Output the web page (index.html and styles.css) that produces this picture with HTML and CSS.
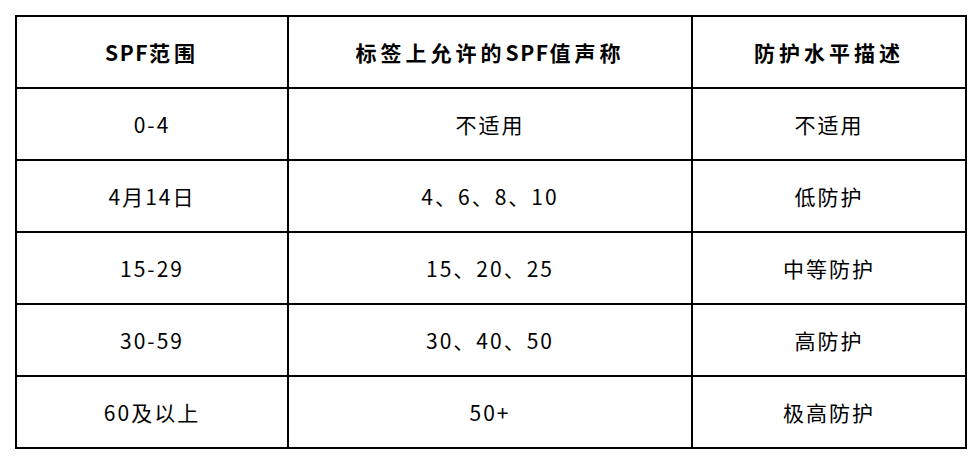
FILE: index.html
```html
<!DOCTYPE html>
<html lang="zh-CN">
<head>
<meta charset="utf-8">
<link rel="stylesheet" href="styles.css">
</head>
<body>
<table class="spf">
  <colgroup><col class="c1"><col class="c2"><col class="c3"></colgroup>
  <thead>
    <tr><th><span class="lat">SPF</span>范围</th><th>标签上允许的<span class="lat">SPF</span>值声称</th><th>防护水平描述</th></tr>
  </thead>
  <tbody>
    <tr><td>0-4</td><td>不适用</td><td>不适用</td></tr>
    <tr><td>4月14日</td><td>4、6、8、10</td><td>低防护</td></tr>
    <tr><td>15-29</td><td>15、20、25</td><td>中等防护</td></tr>
    <tr><td>30-59</td><td>30、40、50</td><td>高防护</td></tr>
    <tr><td>60及以上</td><td>50+</td><td>极高防护</td></tr>
  </tbody>
</table>
</body>
</html>
```
FILE: styles.css
```css
html, body {
  margin: 0;
  padding: 0;
  background: #fff;
}
body {
  padding: 15px 0 0 15px;
  font-family: "Noto Sans CJK SC", "Noto Sans", sans-serif;
  color: #000;
}
.spf {
  border-collapse: collapse;
  table-layout: fixed;
  width: 950px;
}
.c1 { width: 272px; }
.c2 { width: 404px; }
.c3 { width: 274px; }
.spf th, .spf td {
  border: 2px solid #000;
  height: 70px;
  padding: 0;
  text-align: center;
  vertical-align: middle;
  line-height: 1;
}
.spf th {
  font-size: 21px;
  font-weight: 700;
  letter-spacing: 4px;
}
.spf th .lat {
  letter-spacing: 1.5px;
}
.spf td {
  font-size: 21px;
  font-weight: 400;
  letter-spacing: 2px;
}
```
